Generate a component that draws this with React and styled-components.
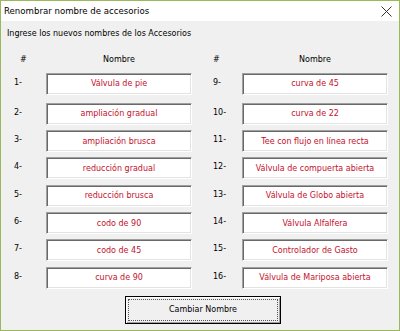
import styled, { createGlobalStyle } from "styled-components";

const left = [
  "Válvula de pie",
  "ampliación gradual",
  "ampliación brusca",
  "reducción gradual",
  "reducción brusca",
  "codo de 90",
  "codo de 45",
  "curva de 90",
];

const right = [
  "curva de 45",
  "curva de 22",
  "Tee con flujo en línea recta",
  "Válvula de compuerta abierta",
  "Válvula de Globo abierta",
  "Válvula Alfalfera",
  "Controlador de Gasto",
  "Válvula de Mariposa abierta",
];

const Global = createGlobalStyle`
  html, body {
    margin: 0;
    padding: 0;
    background: #f0f0f0;
  }
  * {
    box-sizing: border-box;
  }
`;

const App = () => {
  return (
    <>
      <Global />
      <Window>
        <TitleBar>
          <span>Renombrar nombre de accesorios</span>
          <svg width="11" height="11" viewBox="0 0 11 11">
            <path d="M0.5 0.5 L10.5 10.5 M10.5 0.5 L0.5 10.5" stroke="#333" strokeWidth="1" fill="none" />
          </svg>
        </TitleBar>
        <Body>
          <Subtitle>Ingrese los nuevos nombres de los Accesorios</Subtitle>
          <Columns>
            <Column labelWidth={32}>
              <Hash offset={6}>#</Hash>
              <HeadName>Nombre</HeadName>
              {left.map((name, i) => (
                <Row key={name} first={i === 0}>
                  <Label>{i + 1}-</Label>
                  <Field>{name}</Field>
                </Row>
              ))}
            </Column>
            <Column labelWidth={29}>
              <Hash offset={0}>#</Hash>
              <HeadName>Nombre</HeadName>
              {right.map((name, i) => (
                <Row key={name} first={i === 0}>
                  <Label>{i + 9}-</Label>
                  <Field>{name}</Field>
                </Row>
              ))}
            </Column>
          </Columns>
          <Footer>
            <Button>
              <span>Cambiar Nombre</span>
            </Button>
          </Footer>
        </Body>
      </Window>
    </>
  );
};

const Window = styled.div`
  width: 400px;
  height: 331px;
  border: 1px solid #9cb85e;
  background: #f0f0f0;
  font-family: "DejaVu Sans", Verdana, sans-serif;
  display: flex;
  flex-direction: column;
`;

const TitleBar = styled.div`
  height: 20px;
  background: #fff;
  display: flex;
  align-items: center;
  justify-content: space-between;
  padding: 0 7px 0 3px;
  font-size: 8.6px;
  color: #000;
  svg {
    display: block;
  }
`;

const Body = styled.div`
  flex: 1;
  padding: 6px 0 0 13px;
`;

const Subtitle = styled.div`
  font-size: 8px;
  color: #000;
  height: 14px;
  line-height: 14px;
  margin-left: -7px;
`;

const Columns = styled.div`
  display: flex;
  gap: 21px;
  margin-top: 12px;
`;

const Column = styled.div`
  display: grid;
  grid-template-columns: ${(p) => p.labelWidth}px 146px;
  row-gap: 5.3px;
  align-content: start;
`;

const Hash = styled.div`
  font-size: 8px;
  padding-left: ${(p) => p.offset}px;
  height: 14px;
  line-height: 14px;
  margin-bottom: 0.7px;
`;

const HeadName = styled.div`
  font-size: 8px;
  text-align: center;
  height: 14px;
  line-height: 14px;
  margin-bottom: 0.7px;
`;

const Row = styled.div`
  display: contents;
  & > * {
    margin-bottom: ${(p) => (p.first ? "2.6px" : "0")};
  }
`;

const Label = styled.div`
  font-size: 8px;
  color: #000;
  padding-top: 3px;
  line-height: 14px;
`;

const Field = styled.div`
  height: 22px;
  background: #fff;
  border-top: 1px solid #a0a0a0;
  border-left: 1px solid #a0a0a0;
  border-right: 1px solid #fff;
  border-bottom: 1px solid #fff;
  box-shadow: inset 1px 1px #696969, inset -1px -1px #e3e3e3;
  color: #c4102c;
  font-size: 8px;
  display: flex;
  align-items: center;
  justify-content: center;
  white-space: nowrap;
`;

const Footer = styled.div`
  padding: 7px 0 0 111px;
`;

const Button = styled.div`
  width: 156px;
  height: 28px;
  border: 1px solid #000;
  background: #f0f0f0;
  box-shadow: inset 1px 1px #fff, inset -1px -1px #a0a0a0;
  padding: 2px;
  display: flex;
  span {
    flex: 1;
    border: 1px dotted #555;
    display: flex;
    align-items: center;
    justify-content: center;
    font-size: 8px;
    color: #000;
  }
`;

export default App;
